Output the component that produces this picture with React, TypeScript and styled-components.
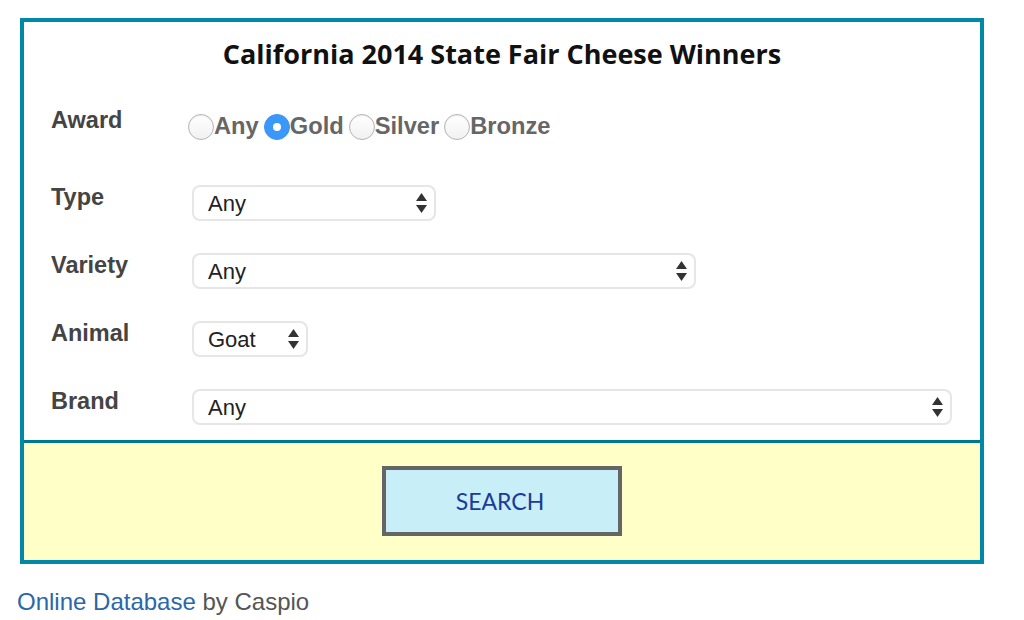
import React, { useState } from 'react';
import styled, { createGlobalStyle } from 'styled-components';

const GlobalStyle = createGlobalStyle`
  body {
    margin: 0;
    background: #ffffff;
    font-family: "Liberation Sans", Arial, sans-serif;
  }
`;

const Page = styled.div`
  display: flex;
  flex-direction: column;
  align-items: flex-start;
  padding-top: 18px;
`;

const Box = styled.form`
  box-sizing: border-box;
  width: 964px;
  margin-left: 20px;
  border: 4px solid #0088a6;
  background: #ffffff;
`;

const FormPart = styled.div`
  padding: 16px 0 15px 27px;
`;

const Title = styled.h1`
  margin: 0 0 36px;
  padding-right: 27px;
  font-family: "Open Sans", Lato, sans-serif;
  font-weight: 700;
  font-size: 27px;
  line-height: 31px;
  color: #111111;
  text-align: center;
`;

const Row = styled.div<{ $height: number }>`
  display: flex;
  align-items: flex-start;
  height: ${(p) => p.$height}px;
`;

const Label = styled.label`
  width: 140px;
  flex: none;
  padding-top: 2px;
  font-size: 23.5px;
  line-height: 26px;
  font-weight: 700;
  color: #444444;
`;

const RadioGroup = styled.div`
  display: flex;
  align-items: center;
  gap: 5px;
  margin-top: 8px;
  margin-left: -3px;
`;

const RadioItem = styled.label`
  display: flex;
  align-items: center;
  font-size: 23.7px;
  font-weight: 700;
  color: #666666;
  cursor: pointer;
`;

const Radio = styled.input`
  appearance: none;
  box-sizing: border-box;
  width: 26px;
  height: 26px;
  margin: 0;
  border-radius: 50%;
  border: 1px solid #b4b4b4;
  background: linear-gradient(#ffffff, #f1f1f1);
  box-shadow: inset 0 1px 1px rgba(0, 0, 0, 0.08);
  display: grid;
  place-items: center;

  &:checked {
    border-color: #3a95f3;
    background: #3b98f8;
    box-shadow: none;
  }

  &:checked::after {
    content: "";
    width: 8px;
    height: 8px;
    border-radius: 50%;
    background: #ffffff;
  }
`;

const SelectWrap = styled.div<{ $width: number }>`
  position: relative;
  width: ${(p) => p.$width}px;
  margin-top: 3px;
  margin-left: 1px;
`;

const Select = styled.select`
  appearance: none;
  box-sizing: border-box;
  width: 100%;
  height: 36px;
  padding: 0 30px 0 14px;
  border: 2px solid #e6e6e6;
  border-radius: 8px;
  background: #ffffff;
  font-family: "Liberation Sans", Arial, sans-serif;
  font-size: 22px;
  color: #222222;
  outline: none;
`;

const Arrows = styled.svg`
  position: absolute;
  right: 9px;
  top: 8px;
  pointer-events: none;
`;

const ButtonPart = styled.div`
  display: flex;
  justify-content: center;
  padding: 23px 0 24px;
  border-top: 3px solid #00788c;
  background: #ffffc8;
`;

const SearchButton = styled.button`
  box-sizing: border-box;
  width: 240px;
  height: 70px;
  padding: 0 4px 0 0;
  border: 4px solid #656565;
  background: #c8eef8;
  font-family: Lato, "Open Sans", sans-serif;
  font-size: 23px;
  color: #1b3b98;
  cursor: pointer;
`;

const Footer = styled.div`
  margin-top: 24px;
  padding-left: 17px;
  font-size: 24px;
  line-height: 28px;
  color: #555555;
`;

const FooterLink = styled.a`
  color: #2a67a8;
  text-decoration: none;
`;

const awards = ['Any', 'Gold', 'Silver', 'Bronze'];

const fields = [
  { name: 'Type', width: 244, options: ['Any', 'Cheddar', 'Jack', 'Blue', 'Fresh'], value: 'Any' },
  { name: 'Variety', width: 504, options: ['Any', 'Aged', 'Flavored', 'Smoked'], value: 'Any' },
  { name: 'Animal', width: 116, options: ['Any', 'Cow', 'Goat', 'Sheep'], value: 'Goat' },
  { name: 'Brand', width: 760, options: ['Any'], value: 'Any' },
];

function SelectArrows() {
  return (
    <Arrows width="11" height="20" viewBox="0 0 11 20">
      <path d="M5.5 0 L11 8 L0 8 Z" fill="#333" />
      <path d="M0 12 L11 12 L5.5 20 Z" fill="#333" />
    </Arrows>
  );
}

export default function App() {
  const [award, setAward] = useState('Gold');
  const [values, setValues] = useState<Record<string, string>>(
    Object.fromEntries(fields.map((f) => [f.name, f.value]))
  );

  return (
    <Page>
      <GlobalStyle />
      <Box onSubmit={(e) => e.preventDefault()}>
        <FormPart>
          <Title>California 2014 State Fair Cheese Winners</Title>
          <Row $height={77}>
            <Label>Award</Label>
            <RadioGroup>
              {awards.map((a) => (
                <RadioItem key={a}>
                  <Radio
                    type="radio"
                    name="award"
                    checked={award === a}
                    onChange={() => setAward(a)}
                  />
                  {a}
                </RadioItem>
              ))}
            </RadioGroup>
          </Row>
          {fields.map((f, i) => (
            <Row key={f.name} $height={i === fields.length - 1 ? 39 : 68}>
              <Label>{f.name}</Label>
              <SelectWrap $width={f.width}>
                <Select
                  value={values[f.name]}
                  onChange={(e) => setValues({ ...values, [f.name]: e.target.value })}
                >
                  {f.options.map((o) => (
                    <option key={o}>{o}</option>
                  ))}
                </Select>
                <SelectArrows />
              </SelectWrap>
            </Row>
          ))}
        </FormPart>
        <ButtonPart>
          <SearchButton type="submit">SEARCH</SearchButton>
        </ButtonPart>
      </Box>
      <Footer>
        <FooterLink href="#">Online Database</FooterLink> by Caspio
      </Footer>
    </Page>
  );
}
